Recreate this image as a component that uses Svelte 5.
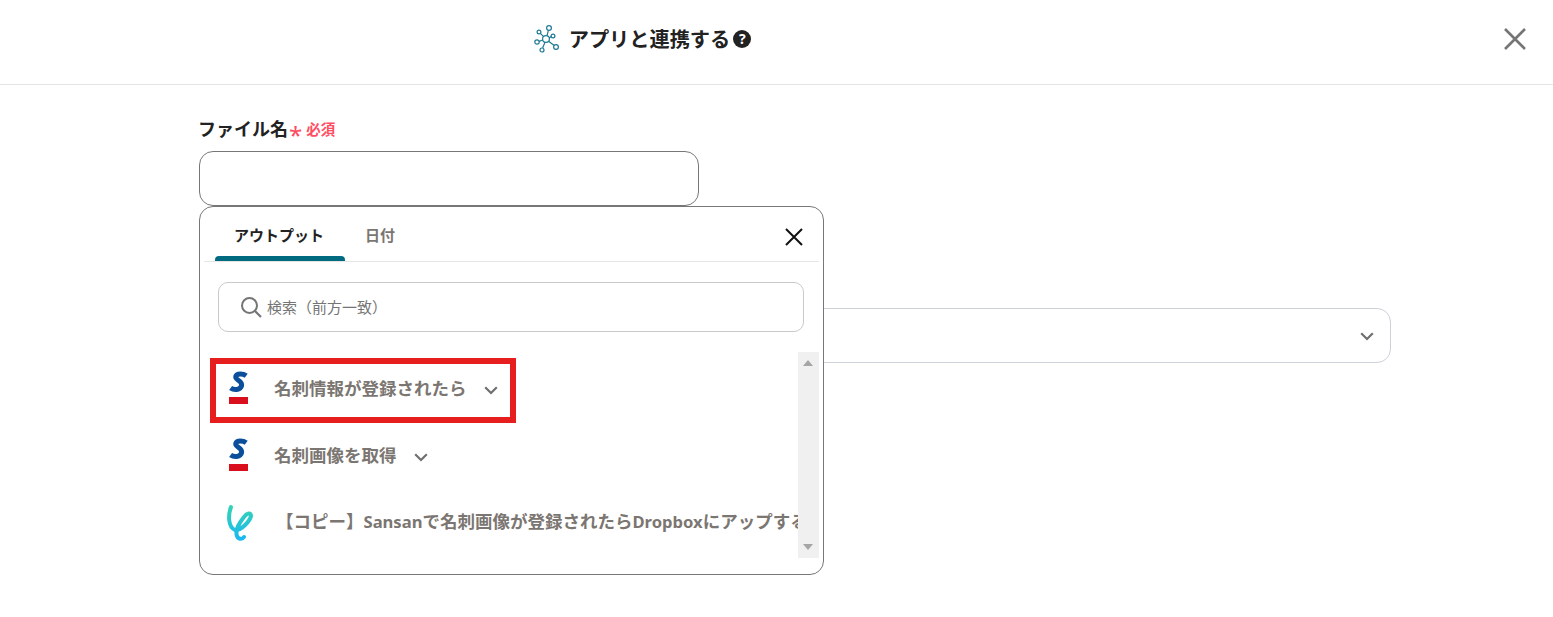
<script>
  const rows = [
    { label: '名刺情報が登録されたら', chevron: true },
    { label: '名刺画像を取得', chevron: true }
  ];
</script>

{#snippet sansan()}
  <svg class="logo" viewBox="0 0 20 34" width="20" height="34" aria-hidden="true">
    <path d="M17.2 5.8C14 3.4 8 3 6.8 6.4C5.6 10 13.6 10.6 12.6 15.6C11.6 20.6 4.6 20.2 1.6 18" fill="none" stroke="#0b4f9c" stroke-width="5"/>
    <rect x="0" y="27" width="19" height="7" fill="#d90f1e"/>
  </svg>
{/snippet}

{#snippet chevron()}
  <svg class="chev" viewBox="0 0 14 9" width="14" height="9" aria-hidden="true">
    <path d="M1.2 1.2L7 7L12.8 1.2" fill="none" stroke="#6f6f6f" stroke-width="2.2"/>
  </svg>
{/snippet}

<div class="page">
  <header class="top">
    <div class="title">
      <svg class="net" viewBox="0 0 26 28" width="26" height="28" aria-hidden="true">
        <g fill="none" stroke="#1f7a94" stroke-width="1.2">
          <circle cx="13" cy="14" r="3.4"/>
          <circle cx="16" cy="3" r="2.4"/>
          <circle cx="6" cy="7" r="1.9"/>
          <circle cx="20" cy="11" r="1.9"/>
          <circle cx="4" cy="17" r="2.2"/>
          <circle cx="9" cy="25" r="2"/>
          <circle cx="23" cy="22" r="2.4"/>
          <path d="M14 10.7L15.4 5.3M10.6 11.6L7.4 8.4M16.2 13L18.2 11.6M9.7 15L6.1 16.4M12 17.3L9.6 23.1M15.6 16.2L21.2 20.5"/>
        </g>
      </svg>
      <h1>アプリと連携する</h1>
      <span class="help">?</span>
    </div>
    <svg class="close" viewBox="0 0 24 24" width="24" height="24" aria-hidden="true">
      <path d="M2 2L22 22M22 2L2 22" stroke="#757575" stroke-width="2.6" fill="none"/>
    </svg>
  </header>

  <main class="form">
    <div class="label-row">
      <span class="label">ファイル名</span>
      <span class="star">*</span>
      <span class="req">必須</span>
    </div>
    <div class="field-wrap">
      <div class="input"></div>
      <div class="pop">
        <div class="tabs">
          <div class="tab active">アウトプット</div>
          <div class="tab">日付</div>
          <svg class="pop-x" viewBox="0 0 18 18" width="18" height="18" aria-hidden="true">
            <path d="M1 1L17 17M17 1L1 17" stroke="#111" stroke-width="2" fill="none"/>
          </svg>
        </div>
        <div class="search">
          <svg viewBox="0 0 22 22" width="22" height="22" aria-hidden="true">
            <circle cx="9.5" cy="9.5" r="7.5" fill="none" stroke="#757575" stroke-width="2"/>
            <path d="M15 15L21 21" stroke="#757575" stroke-width="2.2"/>
          </svg>
          <span>検索（前方一致）</span>
        </div>
        <div class="list">
          <div class="items">
            {#each rows as row}
              <div class="row">
                {@render sansan()}
                <span class="txt">{row.label}</span>
                {@render chevron()}
              </div>
            {/each}
            <div class="row flow">
              <svg class="logo2" viewBox="0 0 30 38" width="30" height="38" aria-hidden="true">
                <defs>
                  <linearGradient id="yg" x1="0" y1="0" x2="0" y2="1">
                    <stop offset="0" stop-color="#34d3b4"/>
                    <stop offset="1" stop-color="#1cb8f0"/>
                  </linearGradient>
                </defs>
                <path d="M8 4C5 12 5 24 12 27C18 28 27 18 28 13C28 9 24 10 21 14C16 20 12 28 14 33C15 36 19 37 21 34" fill="none" stroke="url(#yg)" stroke-width="4" stroke-linecap="round"/>
              </svg>
              <span class="txt">【コピー】<span class="latin">Sansan</span>で名刺画像が登録されたら<span class="latin">Dropbox</span>にアップする</span>
            </div>
          </div>
          <div class="bar">
            <i class="up"></i>
            <i class="down"></i>
          </div>
        </div>
        <div class="mark"></div>
      </div>
    </div>
    <div class="select">
      {@render chevron()}
    </div>
  </main>
</div>

<style>
  :global(body) {
    margin: 0;
    background: #fff;
  }
  .page {
    height: 617px;
    overflow: hidden;
    font-family: "Noto Sans", "Noto Sans CJK JP", sans-serif;
    color: #222;
  }
  .top {
    height: 84px;
    border-bottom: 1px solid #e4e4e4;
    position: relative;
    display: flex;
    justify-content: center;
    padding-right: 269px;
  }
  .title {
    display: flex;
    align-items: center;
    gap: 10px;
    height: 78px;
  }
  h1 {
    margin: 0;
    font-size: 20.2px;
    font-weight: 700;
    color: #222;
    line-height: 1;
  }
  .help {
    width: 18px;
    height: 18px;
    margin-left: -7px;
    border-radius: 50%;
    background: #222;
    color: #fff;
    font-size: 14px;
    font-weight: 700;
    line-height: 18px;
    text-align: center;
  }
  .close {
    position: absolute;
    right: 26px;
    top: 27px;
  }
  .form {
    width: 1192px;
    margin-left: 199px;
    padding-top: 30px;
  }
  .label-row {
    display: flex;
    align-items: center;
    height: 26px;
    margin-bottom: 10px;
    margin-left: -1px;
  }
  .label {
    font-size: 18px;
    font-weight: 700;
    color: #222;
  }
  .star {
    color: #ff4d63;
    font-size: 24px;
    font-weight: 400;
    line-height: 1;
    margin: 13px 4px 0 1px;
  }
  .req {
    color: #ff4d63;
    font-size: 14.5px;
    font-weight: 700;
  }
  .field-wrap {
    position: relative;
    height: 55px;
  }
  .input {
    box-sizing: border-box;
    width: 500px;
    height: 55px;
    border: 1px solid #777;
    border-radius: 14px;
  }
  .pop {
    position: absolute;
    left: 0;
    top: 55px;
    z-index: 2;
    box-sizing: border-box;
    width: 625px;
    height: 369px;
    background: #fff;
    border: 1px solid #777;
    border-radius: 14px;
  }
  .tabs {
    position: relative;
    display: flex;
    height: 54px;
    margin: 0 4px;
    padding-left: 11px;
    border-bottom: 1px solid #e6e6e6;
  }
  .tab {
    padding: 0 19px 0 19px;
    height: 54px;
    line-height: 57px;
    font-size: 15px;
    font-weight: 700;
    color: #7b7671;
    position: relative;
  }
  .tab.active {
    width: 130px;
    box-sizing: border-box;
    color: #222;
    white-space: nowrap;
  }
  .tab.active::after {
    content: "";
    position: absolute;
    left: 0;
    right: 0;
    bottom: 0;
    height: 5px;
    background: #006a80;
    border-radius: 4px 4px 0 0;
  }
  .tab:not(.active) {
    padding-left: 20px;
  }
  .pop-x {
    position: absolute;
    right: 16px;
    top: 21px;
  }
  .search {
    box-sizing: border-box;
    display: flex;
    align-items: center;
    gap: 5px;
    height: 50px;
    margin: 20px 19px 0 18px;
    padding-left: 21px;
    border: 1px solid #c9c9c9;
    border-radius: 10px;
    font-size: 15px;
    color: #757575;
  }
  .search span {
    margin-top: -2px;
  }
  .list {
    position: relative;
    display: flex;
    height: 206px;
    margin-top: 20px;
    margin-right: 4px;
  }
  .items {
    width: 598px;
    overflow: hidden;
    flex: none;
  }
  .bar {
    position: relative;
    width: 21px;
    background: #f0f0f0;
    flex: none;
  }
  .up, .down {
    position: absolute;
    left: 5px;
    width: 0;
    height: 0;
    border-left: 5px solid transparent;
    border-right: 5px solid transparent;
  }
  .up {
    top: 8px;
    border-bottom: 6px solid #a5a5a5;
  }
  .down {
    bottom: 8px;
    border-top: 6px solid #a5a5a5;
  }
  .row {
    display: flex;
    align-items: center;
    height: 67px;
    padding-left: 29px;
    white-space: nowrap;
  }
  .row:first-child {
    height: 70px;
  }
  .row:nth-child(2) {
    margin-top: -2px;
  }
  .row:nth-child(3) {
    margin-top: 1px;
  }
  .logo {
    flex: none;
    margin-right: 25px;
  }
  .logo2 {
    flex: none;
    margin-left: -6px;
    margin-right: 23px;
  }
  .txt {
    font-size: 17.5px;
    font-weight: 700;
    color: #7b7671;
    line-height: 1;
    margin-top: 4px;
  }
  .flow .txt {
    margin-top: 1px;
  }
  .latin {
    font-size: 16.6px;
  }
  .chev {
    flex: none;
    margin: 7px 0 0 17px;
  }
  .mark {
    position: absolute;
    left: 10px;
    top: 151px;
    box-sizing: border-box;
    width: 306px;
    height: 65px;
    border: 6px solid #e61e1e;
    pointer-events: none;
  }
  .select {
    box-sizing: border-box;
    display: flex;
    align-items: center;
    justify-content: flex-end;
    height: 55px;
    margin-top: 102px;
    padding-right: 16px;
    border: 1px solid #ccd2d8;
    border-radius: 14px;
  }
  .select .chev {
    margin: 2px 0 0;
  }
</style>
